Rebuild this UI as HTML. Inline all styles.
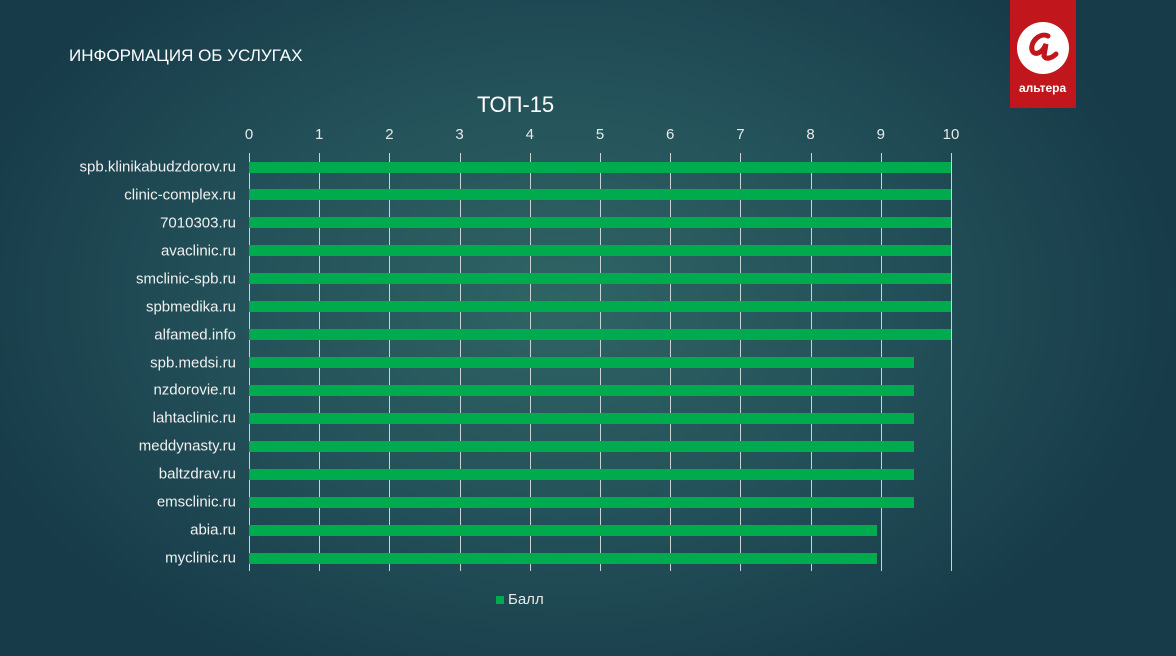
<!DOCTYPE html><html><head><meta charset="utf-8"><style>
body{margin:0;width:1176px;height:656px;overflow:hidden;font-family:"Liberation Sans",sans-serif;
background:radial-gradient(ellipse 620px 420px at 560px 300px,#2f6464 0%,#24525a 50%,#173b49 100%);position:relative;color:#fff}
.t{position:absolute;white-space:nowrap}
.lbl{position:absolute;right:940px;font-size:15px;color:#f0f0f0;transform:translateY(-50%)}
.bar{position:absolute;left:249px;height:11px;background:#00ab4e}
.g{position:absolute;top:153px;height:418px;width:1px;background:#c9d3d3}
.ax{position:absolute;top:126px;font-size:15px;color:#e8e8e8;transform:translateX(-50%)}
</style></head><body>
<div class="t" style="left:69px;top:46px;font-size:17px">ИНФОРМАЦИЯ ОБ УСЛУГАХ</div>
<div class="t" style="left:477px;top:92px;font-size:22px">ТОП-15</div>
<div style="position:absolute;left:1010px;top:0;width:66px;height:108px;background:#c0161c">
<svg width="66" height="80" viewBox="0 0 66 80"><circle cx="33" cy="48" r="26" fill="#fff"/>
<path d="M38 36c-8-4-18 6-16 14 2 6 10 4 14-6l-2 12c2 4 8 2 12-2" stroke="#c0161c" stroke-width="5" fill="none" stroke-linecap="round"/></svg>
<div class="t" style="left:9px;top:81px;font-size:12px;font-weight:bold">альтера</div></div>
<div id="c"></div>
<div class="t" style="left:496px;top:591px;font-size:15px;color:#e8e8e8"><span style="display:inline-block;width:8px;height:8px;background:#00ab4e;margin-right:4px"></span>Балл</div>
<script>
var c=document.getElementById('c'),h='';
for(var i=0;i<=10;i++){var x=249+i*70.2;h+='<div class="g" style="left:'+Math.round(x)+'px"></div><div class="ax" style="left:'+x+'px">'+i+'</div>';}
var L=["spb.klinikabudzdorov.ru","clinic-complex.ru","7010303.ru","avaclinic.ru","smclinic-spb.ru","spbmedika.ru","alfamed.info","spb.medsi.ru","nzdorovie.ru","lahtaclinic.ru","meddynasty.ru","baltzdrav.ru","emsclinic.ru","abia.ru","myclinic.ru"];
var V=[10,10,10,10,10,10,10,9.47,9.47,9.47,9.47,9.47,9.47,8.95,8.95];
for(var j=0;j<15;j++){var y=167+j*27.93;h+='<div class="lbl" style="top:'+y+'px">'+L[j]+'</div><div class="bar" style="top:'+(y-5.5)+'px;width:'+(V[j]*70.2)+'px"></div>';}
c.innerHTML=h;
</script></body></html>
